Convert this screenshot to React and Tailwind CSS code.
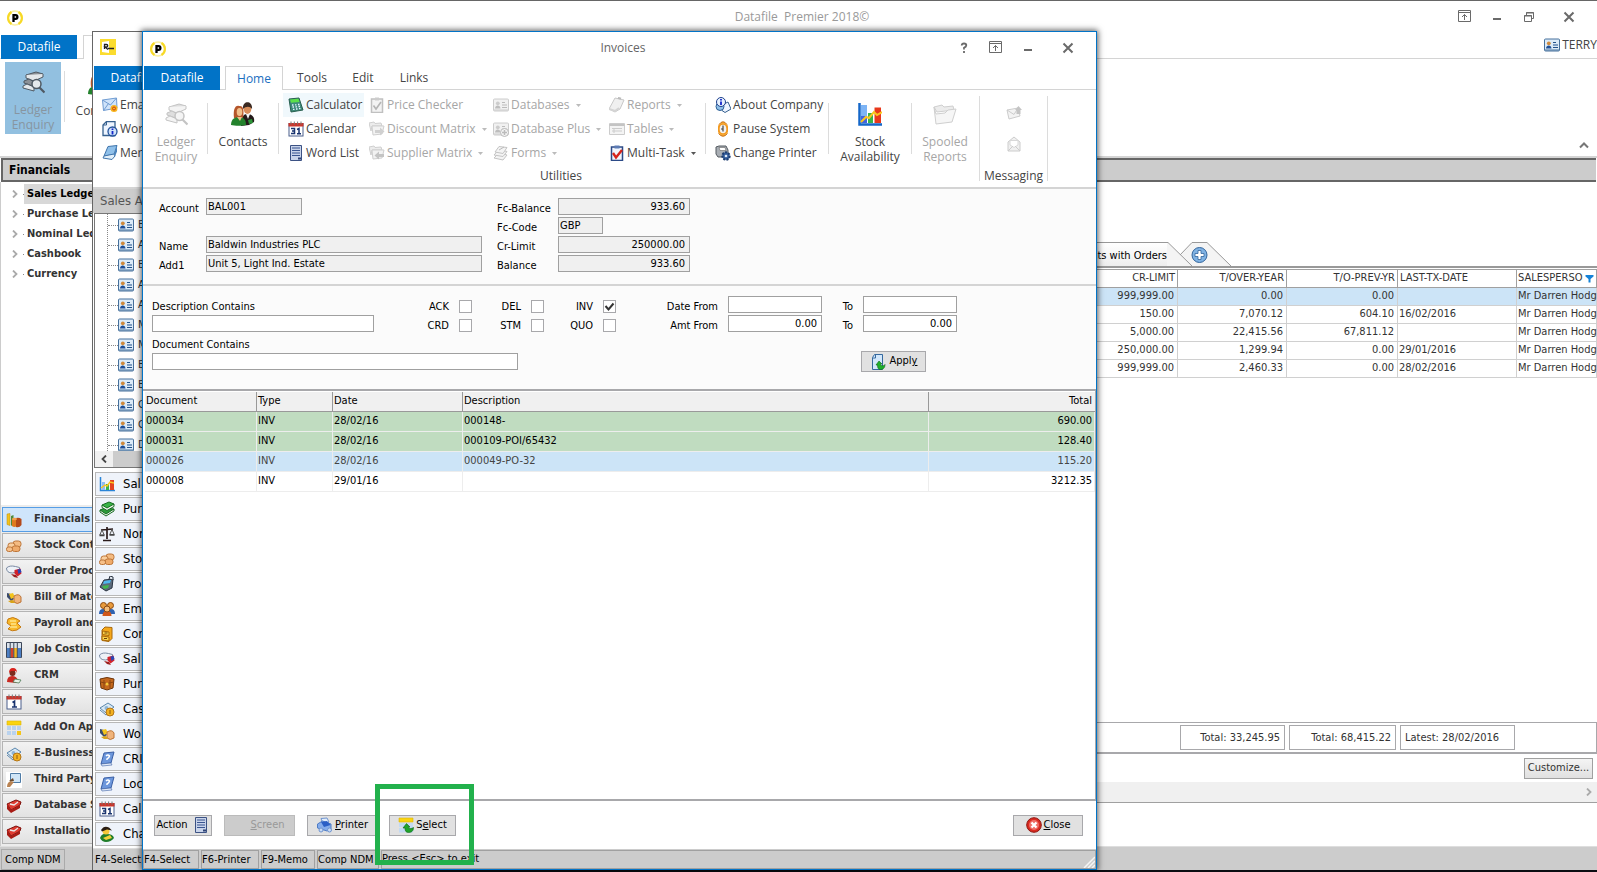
import clsx from 'clsx'

const UI = "font-['Open_Sans','Noto_Sans',sans-serif]"
const FORM = "font-['DejaVu_Sans_Condensed','DejaVu_Sans',sans-serif]"

const TREE = ['Sales Ledge', 'Purchase Le', 'Nominal Led', 'Cashbook', 'Currency']

const MODULES = [
  ['coins', 'Financials'],
  ['boxes', 'Stock Cont'],
  ['order', 'Order Proc'],
  ['works', 'Bill of Mate'],
  ['payroll', 'Payroll and'],
  ['binders', 'Job Costin'],
  ['crm', 'CRM'],
  ['today', 'Today'],
  ['addon', 'Add On Ap'],
  ['cash', 'E-Business'],
  ['thirdparty', 'Third Party'],
  ['toolbox', 'Database S'],
  ['toolbox', 'Installatio'],
]

const SALES_APPS = [
  ['chart', 'Sal'],
  ['books', 'Pur'],
  ['scales', 'Nor'],
  ['boxes', 'Sto'],
  ['register', 'Pro'],
  ['people', 'Em'],
  ['cabinet', 'Cor'],
  ['order', 'Sal'],
  ['chest', 'Pur'],
  ['cash', 'Cas'],
  ['works', 'Wo'],
  ['help', 'CRI'],
  ['help', 'Loc'],
  ['calendar', 'Cal'],
  ['change', 'Cha'],
]

const ACCOUNT_INITIALS = ['B', 'A', 'B', 'A', 'A', 'M', 'M', 'B', 'B', 'C', 'C', 'D']

const INVOICES = [
  { doc: '000034', type: 'INV', date: '28/02/16', desc: '000148-', total: '690.00', tone: 'green' },
  { doc: '000031', type: 'INV', date: '28/02/16', desc: '000109-POI/65432', total: '128.40', tone: 'green' },
  { doc: '000026', type: 'INV', date: '28/02/16', desc: '000049-PO-32', total: '115.20', tone: 'blue' },
  { doc: '000008', type: 'INV', date: '29/01/16', desc: '', total: '3212.35' },
]

const ACCOUNTS = [
  ['999,999.00', '0.00', '0.00', '', 'Mr Darren Hodg'],
  ['150.00', '7,070.12', '604.10', '16/02/2016', 'Mr Darren Hodg'],
  ['5,000.00', '22,415.56', '67,811.12', '', 'Mr Darren Hodg'],
  ['250,000.00', '1,299.94', '0.00', '29/01/2016', 'Mr Darren Hodg'],
  ['999,999.00', '2,460.33', '0.00', '28/02/2016', 'Mr Darren Hodg'],
]

export default function App() {
  return (
    <div className={`relative flex min-h-screen flex-col overflow-hidden border-t border-[#666] bg-white ${UI}`}>
      <MainWindow />
      <SalesWindow />
      <InvoicesWindow />
      <div className="h-0.5 bg-[#0b0d12]" />
    </div>
  )
}

/* ---------- main application window ---------- */

function MainWindow() {
  return (
    <div className="flex flex-1 flex-col">
      <TitleBar title="Datafile  Premier 2018©" muted>
        <WinButton label="Ribbon display"><Icon name="pin" size={14} /></WinButton>
        <WinButton label="Minimise"><Icon name="minimise" size={14} /></WinButton>
        <WinButton label="Restore"><Icon name="restore" size={14} /></WinButton>
        <WinButton label="Close window" wide><Icon name="cross" size={14} /></WinButton>
      </TitleBar>

      <div className="flex h-6 items-stretch border-b border-[#d4d4d4] pl-px">
        <button className="-mb-px w-19 bg-[#0173c7] text-xs text-white">Datafile</button>
        <div className="-mb-px ml-1.5 w-14 border-x border-t border-[#d4d4d4] bg-white" />
        <div className="ml-auto flex items-center gap-0.5 pb-1 text-xs text-[#444]">
          <Icon name="card" />
          TERRY
        </div>
      </div>

      <div className="flex h-[99px] items-start border-b-2 border-[#d4d4d4] pl-[5px]">
        <div className="mt-[3px]">
          <BigButton icon="ledger" label={['Ledger', 'Enquiry']} className="h-[72px] w-14 bg-[#92c0e0] pt-2 text-[#8795a0]" />
        </div>
        <div className="mt-3 ml-[3px] h-[51px] w-px bg-[#dcdcdc]" />
        <BigButton icon="contacts" label={['Contacts']} className="w-[70px] pt-3 text-[#444]" />
        <button aria-label="Collapse ribbon" className="mt-auto mr-2 mb-1.5 ml-auto">
          <Icon name="chevronUp" size={10} />
        </button>
      </div>

      <div className={`mx-px flex h-6 items-center border-y-2 border-l-2 border-[#666] bg-[#ccc] pl-1.5 text-xs font-bold text-black ${FORM}`}>
        Financials
      </div>

      <div className={`flex flex-1 text-[11px] ${FORM}`}>
        <SideNav />
        <AccountsPane />
      </div>

      <div className={`flex h-6 items-end border-t border-[#dedede] bg-[#ccc] pl-px text-[11px] ${FORM}`}>
        <span className="h-[21px] border border-[#aaa] px-[3px] leading-5">Comp NDM</span>
      </div>
    </div>
  )
}

function SideNav() {
  return (
    <aside className="flex w-[220px] flex-col border-l border-[#ccc] font-bold text-[#333]">
      <ul className="pt-0.5">
        {TREE.map((name, i) => (
          <li key={name} className="flex h-5 items-center pl-2.5">
            <Icon name="chevronRight" size={8} />
            <span className="ml-1 w-px border-t border-[#888]" />
            <span className={clsx('h-5 flex-1 pl-[3px] leading-5', i === 0 && 'bg-[#d8d8d8] text-black')}>{name}</span>
          </li>
        ))}
      </ul>
      <ul className="mt-auto flex flex-col gap-px bg-[#ececec] pt-0.5 pb-0.5 pl-px">
        {MODULES.map(([icon, name], i) => (
          <li key={name}>
            <button
              className={clsx('flex h-[25px] w-full items-center gap-3 border pl-[3px] text-left',
                i === 0 ? 'border-[#569de5] bg-[#cfe5fb]' : 'border-[#b4b4b4] bg-linear-to-b from-[#f2f2f2] to-[#e2e2e2]')}>
              <Icon name={icon} />
              {name}
            </button>
          </li>
        ))}
      </ul>
    </aside>
  )
}

function AccountsPane() {
  const head = 'h-[18px] border-r border-b border-[#a0a0a0] px-0.5 font-normal'
  return (
    <main className="flex flex-1 flex-col text-[#333]">
      <div className="flex h-[86px] items-end justify-end border-b-2 border-[#999] pr-[366px]">
        <div className="flex h-6 items-center border-t border-[#999] bg-linear-to-b from-white to-[#ededed] pt-1 pl-4 text-black">
          Accounts with Orders
        </div>
        <svg width="64" height="24" viewBox="0 0 64 24" aria-label="Add tab" role="img">
          <path d="M0 0.5H1L25 24H0Z" fill="#f4f4f4" />
          <path d="M13 13L25 0.5H40L64 24H25Z" fill="#f4f4f4" />
          <path d="M0 0.5H1L25 24M13 13L25 0.5H40L64 24" fill="none" stroke="#999" />
          <circle cx="32.500" cy="13" r="7.500" fill="#7fb2e3" stroke="#33659c" />
          <path d="M31 8.500h3v3h3v3h-3v3h-3v-3h-3v-3h3z" fill="#fff" stroke="#33659c" strokeWidth=".8" />
        </svg>
      </div>

      <table className="mt-px w-full table-fixed border-collapse border-t border-[#a0a0a0]">
        <thead>
          <tr>
            <th className={`${head} text-right`}>CR-LIMIT</th>
            <th className={`${head} w-[109px] text-right`}>T/OVER-YEAR</th>
            <th className={`${head} w-[111px] text-right`}>T/O-PREV-YR</th>
            <th className={`${head} w-[119px] text-left`}>LAST-TX-DATE</th>
            <th className="h-[18px] w-20 border-r border-b border-[#a0a0a0] pl-px text-left font-normal">
              <div className="flex items-center gap-0.5">
                <span className="w-[65px] overflow-hidden">SALESPERSON</span>
                <Icon name="filter" size={9} />
              </div>
            </th>
          </tr>
        </thead>
        <tbody>
          {ACCOUNTS.map((row, i) => (
            <tr key={i} className={clsx(i === 0 && 'bg-[#cce4f7]')}>
              {row.map((cell, c) => (
                <td key={c} className={clsx('h-[18px] border-r border-b border-[#d0d0d0] pl-px whitespace-nowrap', c < 3 && 'pr-[3px] text-right')}>
                  {cell}
                </td>
              ))}
            </tr>
          ))}
        </tbody>
      </table>

      <div className="mt-auto flex h-8 items-center justify-end gap-1 border-t border-r border-b-2 border-[#a8a8ab] pr-[81px]">
        <span className="h-[25px] w-[105px] border border-[#a8a8ab] px-1 text-right leading-6">Total: 33,245.95</span>
        <span className="h-[25px] w-[107px] border border-[#a8a8ab] px-1 text-right leading-6">Total: 68,415.22</span>
        <span className="h-[25px] w-[115px] border border-[#a8a8ab] px-1 leading-6">Latest: 28/02/2016</span>
      </div>
      <div className="flex h-7 items-center justify-end pr-1">
        <button className="h-[21px] w-[69px] border border-[#a0a0a0] bg-linear-to-b from-[#f4f4f4] to-[#e0e0e0]">Customize...</button>
      </div>
      <div className="flex h-5 items-center justify-end bg-[#f0f0f0] pr-1">
        <Icon name="chevronRight" size={8} />
      </div>
      <div className="h-11 border-t border-[#a0a0a0]" />
    </main>
  )
}

/* ---------- sales accounts window ---------- */

function SalesWindow() {
  return (
    <section className="absolute top-[30px] bottom-0.5 left-[92px] flex w-[220px] flex-col border-t border-l border-[#666] bg-white">
      <div className="flex h-[34px] shrink-0 items-start pt-[7px] pl-[7px]"><Icon name="ledgerBadge" /></div>
      <div className="flex h-6 shrink-0 border-b border-[#d4d4d4] pl-px">
        <button className="-mb-px w-19 bg-[#0173c7] text-xs text-white">Datafile</button>
      </div>
      <div className="flex h-[99px] shrink-0 flex-col border-b-2 border-[#d4d4d4] pt-[3px] pl-1">
        <SmallButton icon="email" label="Ema" />
        <SmallButton icon="word" label="Wor" />
        <SmallButton icon="merge" label="Mer" />
      </div>

      <div className={`flex min-h-0 flex-1 flex-col ${FORM}`}>
        <div className="flex h-6 shrink-0 items-center bg-[#ccc] pl-[7px] text-[13px] text-[#555]">Sales A</div>
        <div className="ml-px flex min-h-0 flex-1 flex-col border border-[#777]">
          <ul className="ml-3 min-h-0 flex-1 overflow-hidden border-l border-dotted border-[#888] pt-px">
            {ACCOUNT_INITIALS.map((letter, i) => (
              <li key={i} className="flex h-5 items-center gap-1 text-[11px] text-[#333]">
                <span className="-mr-1 w-2.5 border-t border-dotted border-[#888]" />
                <Icon name="card" />
                {letter}
              </li>
            ))}
          </ul>
          <div className="flex h-4 shrink-0 bg-[#ccc]">
            <span className="grid w-[18px] place-items-center bg-[#f0f0f0]"><Icon name="chevronLeft" size={8} /></span>
          </div>
        </div>
        <ul className="flex shrink-0 flex-col gap-px pt-1 pb-0.5 pl-0.5">
          {SALES_APPS.map(([icon, name], i) => (
            <li key={i}>
              <button className="flex h-6 w-full items-center gap-2 border border-[#b8b8b8] bg-[#eff3fa] pl-[3px] text-left text-[13px] text-black">
                <Icon name={icon} />
                {name}
              </button>
            </li>
          ))}
        </ul>
        <div className="h-[22px] shrink-0 border-t border-[#dedede] bg-[#ccc] pl-0.5 text-[11px] leading-[22px]">F4-Select</div>
      </div>
    </section>
  )
}

/* ---------- invoices window ---------- */

function InvoicesWindow() {
  return (
    <section className="absolute top-[30px] right-[500px] bottom-0.5 left-[142px] flex flex-col border border-[#0173c7] bg-white shadow-[0_0_6px_1px_rgba(0,0,0,0.65)]">
      <TitleBar title="Invoices">
        <WinButton label="Help"><Icon name="question" size={14} /></WinButton>
        <WinButton label="Ribbon display"><Icon name="pin" size={14} /></WinButton>
        <WinButton label="Minimise"><Icon name="minimise" size={14} /></WinButton>
        <WinButton label="Close window" wide><Icon name="cross" size={14} /></WinButton>
      </TitleBar>

      <nav className="flex h-6 items-stretch border-b border-[#d4d4d4] pl-px text-xs text-[#444]">
        <button className="-mb-px w-19 bg-[#0173c7] text-white">Datafile</button>
        <button className="-mb-px ml-[5px] w-[58px] border-x border-t border-[#d4d4d4] bg-white text-[#1b6fbf]">Home</button>
        <button className="w-[58px] pt-px">Tools</button>
        <button className="w-11 pt-px">Edit</button>
        <button className="w-[58px] pt-px">Links</button>
      </nav>

      <Ribbon />
      <AccountSummary />
      <Filters />

      <div className={`flex flex-1 flex-col border-r border-b-2 border-[#a8a8ab] pl-0.5 text-[11px] ${FORM}`}>
        <InvoiceTable />
      </div>

      <footer className={`flex h-12 items-center pr-[13px] pl-[11px] text-[11px] text-black ${FORM}`}>
        <FormButton className="w-[58px] gap-1.5">Action<Icon name="list" /></FormButton>
        <FormButton disabled className="ml-3 w-[71px] pl-4 text-[#999]"><span><u>S</u>creen</span></FormButton>
        <FormButton className="ml-3 w-[71px] gap-0.5"><Icon name="bluePrinter" /><span><u>P</u>rinter</span></FormButton>
        <FormButton className="ml-[11px] w-[67px] gap-0.5"><Icon name="select" /><span>S<u>e</u>lect</span></FormButton>
        <FormButton className="ml-auto w-[70px] gap-0.5"><Icon name="close" /><span><u>C</u>lose</span></FormButton>
      </footer>

      <div className={`flex h-5 items-stretch gap-0.5 bg-[#ccc] pt-px text-[11px] text-black ${FORM}`}>
        <StatusCell className="w-14">F4-Select</StatusCell>
        <StatusCell className="w-[58px]">F6-Printer</StatusCell>
        <StatusCell className="w-[54px]">F9-Memo</StatusCell>
        <StatusCell className="w-[62px]">Comp NDM</StatusCell>
        <StatusCell className="flex flex-1 items-end justify-between">
          Press &lt;Esc&gt; to exit
          <Icon name="grip" size={12} />
        </StatusCell>
      </div>

      {/* highlight around the Select button */}
      <div className="pointer-events-none absolute bottom-1 left-[232px] h-[81px] w-[99px] border-5 border-[#22b14c]" />
    </section>
  )
}

function Ribbon() {
  return (
    <div className="flex h-[99px] items-stretch border-b-2 border-[#d4d4d4] text-[#444]">
      <div className="flex w-[836px] flex-col">
        <div className="flex flex-1 items-start">
          <BigButton icon="ledgerOff" label={['Ledger', 'Enquiry']} disabled className="ml-0.5 w-[62px] pt-3" />
          <Divider />
          <BigButton icon="contacts" label={['Contacts']} className="w-[70px] pt-3" />
          <Divider />
          <div className="ml-1 w-[81px] pt-[3px]">
            <SmallButton icon="calculator" label="Calculator" active />
            <SmallButton icon="calendar" label="Calendar" />
            <SmallButton icon="list" label="Word List" />
          </div>
          <div className="w-[124px] pt-[3px]">
            <SmallButton icon="priceOff" label="Price Checker" disabled />
            <SmallButton icon="folderRightOff" label="Discount Matrix" disabled menu />
            <SmallButton icon="folderLeftOff" label="Supplier Matrix" disabled menu />
          </div>
          <div className="w-[116px] pt-[3px]">
            <SmallButton icon="cardOff" label="Databases" disabled menu />
            <SmallButton icon="cardPlusOff" label="Database Plus" disabled menu />
            <SmallButton icon="formsOff" label="Forms" disabled menu />
          </div>
          <div className="w-[101px] pt-[3px]">
            <SmallButton icon="reportsOff" label="Reports" disabled menu />
            <SmallButton icon="tablesOff" label="Tables" disabled menu />
            <SmallButton icon="task" label="Multi-Task" menu />
          </div>
          <Divider />
          <div className="ml-1 w-[118px] pt-[3px]">
            <SmallButton icon="about" label="About Company" />
            <SmallButton icon="pause" label="Pause System" />
            <SmallButton icon="printer" label="Change Printer" />
          </div>
          <Divider />
          <BigButton icon="stock" label={['Stock', 'Availability']} className="w-[82px] pt-3" />
          <Divider />
          <BigButton icon="spooledOff" label={['Spooled', 'Reports']} disabled className="w-[66px] pt-3" />
        </div>
        <p className="pb-[3px] text-center text-xs leading-4">Utilities</p>
      </div>
      <div className="my-1.5 flex w-[69px] flex-col items-center border-x border-[#dcdcdc]">
        <button disabled aria-label="Send message" className="mt-2"><Icon name="mailOff" /></button>
        <button disabled aria-label="Read message" className="mt-4"><Icon name="mailOpenOff" /></button>
        <p className="-mb-[3px] mt-auto text-xs leading-4">Messaging</p>
      </div>
    </div>
  )
}

function AccountSummary() {
  return (
    <div className={`grid auto-rows-[17px] grid-cols-[47px_291px_61px_132px] gap-y-0.5 border-b-2 border-[#d4d4d4] bg-[#fbfbfb] pt-[9px] pb-3 pl-4 text-[11px] text-black ${FORM}`}>
      <Field id="account" label="Account" value="BAL001" className="w-24" />
      <Field id="fc-balance" label="Fc-Balance" value="933.60" className="w-[132px] pr-1 text-right" />
      <Field id="fc-code" label="Fc-Code" value="GBP" labelClass="col-start-3" className="w-[45px]" />
      <Field id="name" label="Name" value="Baldwin Industries PLC" className="w-[276px]" />
      <Field id="cr-limit" label="Cr-Limit" value="250000.00" className="w-[132px] pr-1 text-right" />
      <Field id="add1" label="Add1" value="Unit 5, Light Ind. Estate" className="w-[276px]" />
      <Field id="balance" label="Balance" value="933.60" className="w-[132px] pr-1 text-right" />
    </div>
  )
}

function Field({ id, label, value, className, labelClass }) {
  return (
    <>
      <label htmlFor={id} className={clsx('leading-[22px]', labelClass)}>{label}</label>
      <input id={id} readOnly defaultValue={value}
        className={clsx('h-[17px] border border-[#a0a0a0] bg-[#f0f0f0] px-px outline-none', className)} />
    </>
  )
}

function Filters() {
  const box = 'h-[17px] border border-[#a0a0a0] bg-white px-1 text-right outline-none'
  return (
    <form onSubmit={(e) => e.preventDefault()}
      className={`grid grid-cols-[249px_72px_72px_72px_205px_135px] grid-rows-[repeat(4,17px)] gap-y-0.5 border-b-2 border-[#a8a8ab] bg-[#fbfbfb] pt-2.5 pb-[19px] pl-[9px] text-[11px] text-black ${FORM}`}>
      <label htmlFor="desc" className="leading-[22px]">Description Contains</label>
      <Check label="ACK" />
      <Check label="DEL" />
      <Check label="INV" checked />
      <div className="flex justify-end gap-2.5">
        <label htmlFor="date-from" className="leading-[22px]">Date From</label>
        <input id="date-from" className={`${box} w-[94px]`} />
      </div>
      <div className="flex justify-end gap-2.5">
        <label htmlFor="date-to" className="leading-[22px]">To</label>
        <input id="date-to" className={`${box} w-[94px]`} />
      </div>

      <input id="desc" className={`${box} w-[222px]`} />
      <Check label="CRD" />
      <Check label="STM" />
      <Check label="QUO" />
      <div className="flex justify-end gap-2.5">
        <label htmlFor="amt-from" className="leading-[22px]">Amt From</label>
        <input id="amt-from" defaultValue="0.00" className={`${box} w-[94px]`} />
      </div>
      <div className="flex justify-end gap-2.5">
        <label htmlFor="amt-to" className="leading-[22px]">To</label>
        <input id="amt-to" defaultValue="0.00" className={`${box} w-[94px]`} />
      </div>

      <label htmlFor="doc" className="col-span-6 leading-[22px]">Document Contains</label>
      <input id="doc" className={`${box} col-span-5 w-[366px]`} />
      <div className="flex items-center justify-center pl-2">
        <FormButton className="w-[65px] shrink-0 gap-1"><Icon name="apply" /><span>Appl<u>y</u></span></FormButton>
      </div>
    </form>
  )
}

function Check({ label, checked }) {
  return (
    <label className="flex items-end justify-end gap-2.5 pr-px">
      <span className="leading-3">{label}</span>
      <span className="grid">
        <input type="checkbox" defaultChecked={checked}
          className="peer col-start-1 row-start-1 size-[13px] appearance-none border border-[#a8a8ab] bg-white" />
        <svg viewBox="0 0 13 13" className="pointer-events-none invisible col-start-1 row-start-1 size-[13px] peer-checked:visible">
          <path d="M2.500 6L5.500 9.500L10.500 3.500" fill="none" stroke="#333" strokeWidth="2" />
        </svg>
      </span>
    </label>
  )
}

function InvoiceTable() {
  const head = 'h-5 border-r border-b border-[#999] pl-px text-left font-normal'
  return (
    <table className="mt-px w-full table-fixed border-separate border-spacing-0 text-black">
      <thead className="bg-[#f0f0f0]">
        <tr>
          <th className={`${head} w-28`}>Document</th>
          <th className={`${head} w-[76px]`}>Type</th>
          <th className={`${head} w-[130px]`}>Date</th>
          <th className={head}>Description</th>
          <th className="h-5 w-[166px] border-b border-[#999] pr-[3px] text-right font-normal">Total</th>
        </tr>
      </thead>
      <tbody>
        {INVOICES.map((inv) => (
          <tr key={inv.doc}
            className={clsx('[&>td]:h-5 [&>td]:border-r [&>td]:border-b [&>td]:border-[#ededed] [&>td]:pl-px',
              inv.tone === 'green' && 'bg-[#c0dcc0]',
              inv.tone === 'blue' && 'bg-[#cce4f7] text-[#444]')}>
            <td>{inv.doc}</td>
            <td>{inv.type}</td>
            <td>{inv.date}</td>
            <td>{inv.desc}</td>
            <td className="pr-0.5 text-right">{inv.total}</td>
          </tr>
        ))}
      </tbody>
    </table>
  )
}

/* ---------- shared pieces ---------- */

function TitleBar({ title, muted, children }) {
  return (
    <header className="grid h-[34px] grid-cols-[1fr_auto_1fr] items-center pl-[7px]">
      <Icon name="logo" />
      <h1 className={clsx('pb-0.5 text-xs whitespace-pre', muted ? 'text-[#999]' : 'text-[#666]')}>{title}</h1>
      <div className="flex justify-end pr-1 pb-0.5">{children}</div>
    </header>
  )
}

function WinButton({ label, wide, children }) {
  return <button aria-label={label} className={clsx('grid place-items-center', wide ? 'w-12' : 'w-8')}>{children}</button>
}

function BigButton({ icon, label, className, disabled }) {
  return (
    <button disabled={disabled}
      className={clsx('flex flex-col items-center gap-2 text-xs leading-[15px]', disabled && 'text-[#a6a6a6]', className)}>
      <Icon name={icon} size={24} />
      <span>
        {label.map((line) => <span key={line} className="block">{line}</span>)}
      </span>
    </button>
  )
}

function SmallButton({ icon, label, active, disabled, menu }) {
  return (
    <button disabled={disabled}
      className={clsx('flex h-6 items-center gap-0.5 pl-[5px] text-xs whitespace-nowrap',
        disabled ? 'text-[#a6a6a6]' : 'text-[#444]', active && 'w-full bg-[#f0f8fc]')}>
      <Icon name={icon} />
      {label}
      {menu && (
        <svg width="5" height="3" viewBox="0 0 5 3" className="ml-1"><path d="M0 0h5L2.500 3z" fill={disabled ? '#bbb' : '#555'} /></svg>
      )}
    </button>
  )
}

function FormButton({ className, disabled, children }) {
  return (
    <button type="button" disabled={disabled}
      className={clsx('flex h-[21px] items-center justify-center border',
        disabled ? 'border-[#bbb] bg-[#ccc]' : 'border-[#a8a8ab] bg-[#e1e1e1]', className)}>
      {children}
    </button>
  )
}

function StatusCell({ className, children }) {
  return <span className={clsx('border border-[#a0a0a0] leading-[18px] whitespace-nowrap', className)}>{children}</span>
}

function Divider() {
  return <span className="mt-[13px] h-[51px] w-px bg-[#dcdcdc]" />
}

function Icon({ name, size = 16 }) {
  const box = BOXES[name] || 16
  return (
    <svg width={size} height={size} viewBox={`0 0 ${box} ${box}`} className="shrink-0" aria-hidden="true">
      {ICONS[name]}
    </svg>
  )
}

const BOXES = {
  pin: 14, minimise: 14, restore: 14, cross: 14, question: 14,
  chevronUp: 10, chevronRight: 8, chevronLeft: 8, filter: 9, grip: 12,
  ledger: 24, ledgerOff: 24, contacts: 24, stock: 24, spooledOff: 24,
}

function Card({ edge, fill, ink, head, shirt }) {
  return (
    <>
      <rect x=".5" y="2" width="15" height="12" rx="1" fill={fill} stroke={edge} />
      <circle cx="4.800" cy="6.300" r="1.900" fill={head} />
      <path d="M2 11.500c0-4 5.500-4 5.500 0z" fill={shirt} />
      <path d="M9 5.500h3M9 8h5M9 10.500h5" stroke={ink} strokeWidth="1.200" />
      <path d="M1 13h14" stroke={edge} />
    </>
  )
}

function LedgerArt({ dark, mid, light }) {
  return (
    <>
      <path d="M5 5l10-3 7 2-9 4z" fill={mid} stroke={dark} />
      <path d="M5 5v3l8 3 9-4V4" fill={light} stroke={dark} />
      <path d="M3 11l5-2 5 3 4-1v2l-5 3-9-3z" fill={mid} stroke={dark} />
      <path d="M2 16l4-2 7 3v4L2 18z" fill={light} stroke={dark} />
      <circle cx="15.500" cy="14" r="4.500" fill={light} stroke={dark} strokeWidth="1.500" />
      <path d="M18.500 17.500l5 5" stroke={dark} strokeWidth="2.200" />
    </>
  )
}

function CalendarArt({ children }) {
  return (
    <>
      <rect x="1" y="2.500" width="14" height="12.500" fill="#fff" stroke="#4a5f8c" />
      <path d="M.5 2h15v3.500H.5z" fill="#c8372d" />
      <path d="M3 .5v3M6.300.5v3M9.600.5v3M13 .5v3" stroke="#777" />
      {children}
    </>
  )
}

const ICONS = {
  logo: (
    <>
      <circle cx="8" cy="8" r="7" fill="#fff" stroke="#fbf0a0" strokeWidth="1.500" />
      <path d="M4.500 2A7 7 0 0 0 4.500 14M11.500 2A7 7 0 0 1 11.500 14" fill="none" stroke="#f7d926" strokeWidth="2.200" />
      <path d="M6.500 12V5.200H8.600a1.800 1.800 0 0 1 0 3.600H6.500" fill="none" stroke="#000" strokeWidth="2.300" />
    </>
  ),
  ledgerBadge: (
    <>
      <path d="M0 0h16v16H0z" fill="#fbdc2e" />
      <path d="M2 3l7-1v12l-7-1z" fill="#fff" />
      <path d="M4.500 10V5.500h2a1 1 0 0 1 0 2.500H5l3 2.500M8 9.500h6" fill="none" stroke="#222" strokeWidth="1.300" />
    </>
  ),
  pin: <path d="M.5.500h12v11H.5zM.5 2.500h12M6.500 10V4.500M4 7l2.500-2.500L9 7" fill="none" stroke="#6a6a6a" />,
  minimise: <path d="M3 9h8" stroke="#6a6a6a" strokeWidth="2" />,
  restore: <path d="M4.500 5V2.500h7v6H9.500M4 3h8M2.500 5.500h7v6h-7zM2 6h8" fill="none" stroke="#6a6a6a" />,
  cross: <path d="M2.500 2.500l9 9M11.500 2.500l-9 9" stroke="#6a6a6a" strokeWidth="2" />,
  question: <path d="M4.700 4.500Q4.700 2.500 7 2.500Q9.300 2.500 9.300 4.300Q9.300 5.800 7 6.800V8.500M7 10v2" fill="none" stroke="#6a6a6a" strokeWidth="1.800" />,
  chevronUp: <path d="M1 7.500L5 3.500L9 7.500" fill="none" stroke="#777" strokeWidth="2" />,
  chevronRight: <path d="M2 0.500L5.500 4L2 7.500" fill="none" stroke="#aaa" strokeWidth="1.800" />,
  chevronLeft: <path d="M6 .5L2.500 4L6 7.500" fill="none" stroke="#444" strokeWidth="1.800" />,
  filter: <path d="M.5 1h8v1.500L5.500 5v3.500h-2V5L.5 2.500z" fill="#1583d8" />,
  grip: <path d="M1 12L12 1M5 12l7-7M9 12l3-3" stroke="#f5f5f5" strokeWidth="1.500" />,

  card: <Card edge="#46709c" fill="#dcebf8" ink="#21518a" head="#d08a3c" shirt="#1f4f96" />,
  cardOff: <Card edge="#ccc" fill="#f1f1f1" ink="#bbb" head="#ccc" shirt="#bdbdbd" />,
  cardPlusOff: (
    <>
      <Card edge="#ccc" fill="#f1f1f1" ink="#bbb" head="#ccc" shirt="#bdbdbd" />
      <circle cx="11.500" cy="11.500" r="4" fill="#f4f4f4" stroke="#bbb" />
      <path d="M11.500 9v5M9 11.500h5" stroke="#bbb" strokeWidth="1.500" />
    </>
  ),
  ledger: <LedgerArt dark="#4f5963" mid="#8c9197" light="#e4e8eb" />,
  ledgerOff: <LedgerArt dark="#c4c4c4" mid="#dedede" light="#f4f4f4" />,
  contacts: (
    <>
      <path d="M10 24c-1-9 3-12 6-12 5 0 8 3 7 8l-5 3z" fill="#241a1a" />
      <path d="M15 12l2 5 2-5z" fill="#f4f4f4" />
      <ellipse cx="16.500" cy="7" rx="3.800" ry="5" fill="#d88d5a" />
      <path d="M12 7c-1-9 10-9 9 0-2-3-6-3-9 0z" fill="#3b2a22" />
      <path d="M3 16c-1-8 1-13 5-12 5-1 5 6 4 12z" fill="#b5562b" />
      <ellipse cx="8.500" cy="10" rx="2.800" ry="4" fill="#f1bf8a" />
      <path d="M0 23c0-6 4-8 8-8 5 0 7 3 7 8-4 1-11 1-15 0z" fill="#23822c" />
      <path d="M6 15l3 4 2-4z" fill="#f1bf8a" />
      <path d="M17 18l4-1 1 4-4 1z" fill="#2d9638" />
    </>
  ),
  calculator: (
    <>
      <path d="M1 2l10-1 4 12-12 2z" fill="#3d8a7a" stroke="#28604f" />
      <path d="M2 2.500l8.500-.8 1 3.300-8.500.8z" fill="#5be04a" />
      <path d="M4 8h1.500M7 7.800h1.500M10 7.500h1.500M4.500 10h1.500M7.500 9.800H9M10.500 9.500H12M5 12.300h1.500M8 12h1.500M11 11.700h1.500" stroke="#e6f4ff" strokeWidth="1.300" />
    </>
  ),
  calendar: (
    <CalendarArt>
      <path d="M3 7.500h3.500v5H3M4 10h2.500M9 8.500l2-1v5.500M9 12.700h4" fill="none" stroke="#1a3570" strokeWidth="1.500" />
    </CalendarArt>
  ),
  today: (
    <CalendarArt>
      <path d="M6.500 8.500l2-1.200V13M6 13h5" fill="none" stroke="#1a3570" strokeWidth="1.700" />
    </CalendarArt>
  ),
  list: (
    <>
      <path d="M2.500.5h11v15h-11z" fill="#c9d4ea" stroke="#3c5284" />
      <path d="M4 3h8M4 5.500h8M4 8h8M4 10.500h8" stroke="#3a5590" strokeWidth="1.200" />
      <path d="M10 12.500h3v2h-3z" fill="#2e4375" />
    </>
  ),
  priceOff: (
    <>
      <path d="M2.500 2h11v13.500h-11z" fill="#f3f3f3" stroke="#c0c0c0" strokeWidth="1.500" />
      <path d="M6 .5h4v3H6z" fill="#ccc" />
      <path d="M4.500 8.500L7 12l5-7" fill="none" stroke="#b5b5b5" strokeWidth="1.600" />
    </>
  ),
  folderRightOff: (
    <>
      <path d="M0 2l5-1 1 1.500 6-.5 1 3H3l-1 5z" fill="#ececec" stroke="#cfcfcf" />
      <path d="M3 5h12l-2 8-9 1z" fill="#f2f2f2" stroke="#cfcfcf" />
      <path d="M6 9h5V6.500l4.500 4-4.500 4V12H6z" fill="#d0d0d0" />
    </>
  ),
  folderLeftOff: (
    <>
      <path d="M0 2l5-1 1 1.500 6-.5 1 3H3l-1 5z" fill="#ececec" stroke="#cfcfcf" />
      <path d="M3 5h12l-2 8-9 1z" fill="#f2f2f2" stroke="#cfcfcf" />
      <path d="M15 9h-5V6.500l-4.500 4 4.500 4V12h5z" fill="#c4c4c4" />
    </>
  ),
  formsOff: (
    <>
      <path d="M1 13l9 2 4-5-8-2z" fill="#f4f4f4" stroke="#c4c4c4" />
      <path d="M1 10l9 1.500 4-5-8-2z" fill="#f4f4f4" stroke="#c4c4c4" />
      <path d="M2 7l8 1.500 4-6-8-1z" fill="#f4f4f4" stroke="#c4c4c4" />
      <path d="M6 5l5-3" stroke="#bbb" />
    </>
  ),
  reportsOff: (
    <>
      <path d="M6 1l9 2-4 9-5 3-6-3z" fill="#f0f0f0" stroke="#c8c8c8" />
      <path d="M0 12l6 2 4-3" fill="none" stroke="#d4d4d4" strokeWidth="2" />
      <path d="M9 .8l3 1" stroke="#bbb" strokeWidth="2" />
    </>
  ),
  tablesOff: (
    <>
      <path d="M.5 2.500h15v11H.5z" fill="#f4f4f4" stroke="#ccc" />
      <path d="M.5 4h15" stroke="#c4c4c4" strokeWidth="2" />
      <path d="M3 7.500h10M3 10h10M5 7v5" stroke="#ccc" />
    </>
  ),
  task: (
    <>
      <path d="M2.500 2h11v13.500h-11z" fill="#f2f6fd" stroke="#2b4a87" strokeWidth="1.500" />
      <path d="M5.500.5h5v3h-5z" fill="#5d7cb5" />
      <path d="M4 8l3 4.500L13 5" fill="none" stroke="#d6241c" strokeWidth="2.400" />
    </>
  ),
  about: (
    <>
      <path d="M9 7l4-2 3 7-6 3.500-3-2z" fill="#eef5ff" stroke="#37618f" />
      <circle cx="5" cy="9.500" r="4" fill="#8fc0e8" stroke="#2e5f94" />
      <circle cx="6" cy="5" r="4.500" fill="#e8f2ff" stroke="#1d3f8c" />
      <path d="M6 2v1.500M6 4.500v3.500" stroke="#1426c9" strokeWidth="1.800" />
    </>
  ),
  pause: (
    <>
      <path d="M4 3.500Q8-2 12 3.500M3.500 12.500Q8 18 12.500 12.500" fill="#f6a733" stroke="#c8741a" />
      <rect x="3" y="3" width="10" height="10" rx="3" fill="#f39a1f" />
      <ellipse cx="8" cy="8" rx="3.300" ry="4.300" fill="#f2f2f2" />
      <path d="M8 4.500V8h-2M8 8v2.500" fill="none" stroke="#444" strokeWidth="1.200" />
    </>
  ),
  printer: (
    <>
      <path d="M1 2l3-1h7l2 4v7H3L1 9z" fill="#a9aeb4" stroke="#545a60" />
      <path d="M4 2.500h6l1 3H5z" fill="#fff" stroke="#666" strokeWidth=".6" />
      <circle cx="11" cy="11" r="3.700" fill="#355f9e" stroke="#1d3d70" strokeDasharray="2 1.200" strokeWidth="2" />
      <circle cx="11" cy="11" r="1.300" fill="#dfe9f7" />
    </>
  ),
  stock: (
    <>
      <path d="M1.500 1v21.500H24" fill="none" stroke="#1467c9" strokeWidth="2.500" />
      <path d="M3 3h6v18H3z" fill="#7db4f5" />
      <path d="M3 14h6v7H3z" fill="#3f64de" />
      <path d="M10 11h5v10h-5z" fill="#38b44a" />
      <path d="M16.500 5.500H23V21h-6.500z" fill="#e8381b" />
      <path d="M3 20l5-5 3 1 5-6 3 3 5-3" fill="none" stroke="#fbc51e" strokeWidth="2" />
    </>
  ),
  spooledOff: (
    <>
      <path d="M1 5l8-2 2 2 9-1 1 4-17 2z" fill="#ececec" stroke="#cfcfcf" />
      <path d="M1 5l2 17 16-2 4-13-8 1-3 3-9 1z" fill="#f6f6f6" stroke="#cfcfcf" />
    </>
  ),
  mailOff: (
    <>
      <path d="M1 6l11-2 2 8-11 3z" fill="#f3f3f3" stroke="#ccc" />
      <path d="M1 6l7 4.500L12 4" fill="none" stroke="#ccc" />
      <path d="M9 6l3.500-4L16 6h-1.500v4h-4V6z" fill="#c4c4c4" />
    </>
  ),
  mailOpenOff: (
    <>
      <path d="M2 6l6-5 6 5v9H2z" fill="#f0f0f0" stroke="#ccc" />
      <path d="M4 4.500h8V9L8 11.500 4 9z" fill="#fff" stroke="#d8d8d8" />
      <path d="M2 15l5-5M14 15l-5-5" stroke="#ccc" />
    </>
  ),
  email: (
    <>
      <path d="M.5 3l14-2L15 11 1.500 13.500z" fill="#cfe3fa" stroke="#6f9bd1" />
      <path d="M.5 3l8 5 6-7M1.500 13.500l5-7" fill="none" stroke="#6f9bd1" />
      <circle cx="12" cy="11.500" r="3.500" fill="#f7b51e" />
      <circle cx="12" cy="11.500" r="1.500" fill="none" stroke="#d0410f" />
    </>
  ),
  word: (
    <>
      <path d="M4.500.5H13v14H1V4z" fill="#eef5ff" stroke="#37618f" strokeWidth="1.300" />
      <path d="M1 4h3.500V.5" fill="none" stroke="#37618f" />
      <circle cx="10.500" cy="10.500" r="4.500" fill="#cfe2fa" stroke="#23529b" strokeWidth="1.300" />
      <path d="M10.500 7.500V9M10.500 10v3.500" stroke="#1426c9" strokeWidth="1.800" />
    </>
  ),
  merge: (
    <>
      <path d="M6 1.500l9-1-3 9-10 1.500z" fill="#8fc0ea" stroke="#3f74ab" />
      <path d="M2 11l10-2 1 2-3 3.500-9-1.500z" fill="#e2f0fb" stroke="#3f74ab" />
      <path d="M12 9.500l3-9v6l-2 5z" fill="#4a83bd" />
    </>
  ),
  apply: (
    <>
      <path d="M4.500.5h8v15h-10v-12z" fill="#d2e7fb" stroke="#35699f" />
      <path d="M2.500 4h3V.5" fill="none" stroke="#35699f" />
      <path d="M6 11l3-4 3 3h-1.500c0 2 3 2.500 4.500.5 0 4-2.500 5-4.500 5-2.500 0-3-2-3-4.500z" fill="#1fb02a" stroke="#0e6418" strokeWidth=".6" />
    </>
  ),
  select: (
    <>
      <path d="M1 1h14v4H1z" fill="#fbd40f" stroke="#d8b40a" strokeWidth=".6" />
      <path d="M1 6h6.500v4H1zM1 11h6.500v4.500H1zM8.500 6H15v9.500H8.500z" fill="#c3daf3" />
      <path d="M5 11l3.500-4.500L12 10h-1.500c0 2 3 2 5 .5 0 4-2.500 5-5 5S7 14 7 11z" fill="#1fa32a" stroke="#0e6418" strokeWidth=".6" />
    </>
  ),
  bluePrinter: (
    <>
      <path d="M4 1.500l6-.5 2 4-6 2z" fill="#e2edfb" stroke="#6f94d0" />
      <path d="M.5 7l5-3 8.500 3v5l-4 2-9.500-3z" fill="#84aceb" stroke="#4f7cc4" />
      <path d="M4 5l6-1 3.500 4-6.500 2z" fill="#2a5fc6" />
      <circle cx="4" cy="13" r="2" fill="#c8dbf5" stroke="#6f94d0" />
      <circle cx="12.500" cy="13" r="2" fill="#c8dbf5" stroke="#6f94d0" />
    </>
  ),
  close: (
    <>
      <circle cx="8" cy="8" r="7.300" fill="#d92a20" stroke="#8f1812" />
      <circle cx="8" cy="8" r="5" fill="#ef6f68" />
      <path d="M5.500 5.500l5 5M10.500 5.500l-5 5" stroke="#fff" strokeWidth="2.300" />
    </>
  ),

  coins: (
    <>
      <path d="M1 2l3-.5v12L1 12.500z" fill="#f2c21b" stroke="#b88a0c" strokeWidth=".5" />
      <path d="M5 4l2.500-1v11L5 13.500z" fill="#4e8a3b" />
      <path d="M6 7q3-2 5 0v7q-3 2-5 0z" fill="#e07a1f" />
      <path d="M10 6q3-1 5.500 1v6q-2 3-5.500 2z" fill="#b4491a" />
      <ellipse cx="8.500" cy="7" rx="2.500" ry="1.200" fill="#f3a04e" />
    </>
  ),
  boxes: (
    <>
      <rect x="7" y="3" width="8" height="6" rx="2.500" fill="#f4bb82" stroke="#bd7538" />
      <rect x="2" y="5" width="7" height="6" rx="2.500" fill="#f9cfa0" stroke="#bd7538" />
      <rect x="6" y="8" width="8" height="5.500" rx="2.500" fill="#efab6b" stroke="#bd7538" />
      <rect x=".5" y="9" width="6" height="4.500" rx="2" fill="#f6c08a" stroke="#bd7538" />
    </>
  ),
  order: (
    <>
      <path d="M.5 4q3-3 9-1.500l4 1V7l-7 2q-6 0-6-5z" fill="#eef2f8" stroke="#7b8ba3" />
      <path d="M8.500 6l6-1.500 1 5-4 3-3-3z" fill="#d3232b" />
      <path d="M11.500 5.500l3-.5 1 3-3 2z" fill="#2946b8" />
      <path d="M5 10l5 1 2 3-4-1z" fill="#9b1f1f" />
    </>
  ),
  works: (
    <>
      <path d="M1 3l4 1 3 5-3 2-4-4z" fill="#3b4a6b" />
      <path d="M3 4l4-1 2 4-4 2z" fill="#f3c41c" />
      <path d="M8 6q5-3 7 1v5q-4 3-7 0z" fill="#f0b47c" stroke="#bd7538" />
      <path d="M2 11l5-1 2 3-4 0z" fill="#d9a418" />
    </>
  ),
  payroll: (
    <>
      <path d="M2 3q5-3 9 0l3 2-3 2 4 4-4 3q-5 2-9-1l3-3-4-3z" fill="#f8b92b" stroke="#c67a12" />
      <path d="M4 5h6M5 8h5M4 11h7" stroke="#fde58a" strokeWidth="1.300" />
    </>
  ),
  binders: (
    <>
      <path d="M.5.5h15v15H.5z" fill="#dbe3ec" stroke="#3c4658" />
      <path d="M1 6h3v9.500H1z" fill="#4c7fc4" />
      <path d="M4.500 6h3v9.500h-3z" fill="#d3412b" />
      <path d="M8 6h3v9.500H8z" fill="#f2b51f" />
      <path d="M11.500 6h3.500v9.500h-3.500z" fill="#4c7fc4" />
      <path d="M4.200 0v16M7.800 0v16M11.300 0v16" stroke="#3c4658" />
    </>
  ),
  crm: (
    <>
      <path d="M1 14q0-6 5-6t6 5l-2 2z" fill="#c92a22" />
      <circle cx="6.500" cy="5" r="3" fill="#7c2b1d" />
      <path d="M3 5q0-5 4-5t4 5l-1-2H5z" fill="#d9231d" />
      <path d="M9 11l6 1-2 3-6-1z" fill="#e9f2e9" stroke="#4c7a55" strokeWidth=".8" />
    </>
  ),
  addon: (
    <>
      <path d="M1 1h14v4H1z" fill="#fbd40f" stroke="#d8b40a" strokeWidth=".6" />
      <path d="M1 6h4v4H1zM6 6h4v4H6zM1 11h4v4H1zM6 11h4v4H6zM11 6h4v4h-4z" fill="#b9d2ee" />
      <path d="M11 11h4v4h-4z" fill="#f5c518" />
    </>
  ),
  cash: (
    <>
      <path d="M1 7l8-5 6 4-8 6z" fill="#d8e8f5" stroke="#5b87ad" />
      <path d="M1 9l6 5 3-2" fill="none" stroke="#5b87ad" />
      <circle cx="7.500" cy="7" r="2" fill="#8db4d6" />
      <circle cx="11" cy="11" r="4" fill="#f3b222" stroke="#b3761a" />
      <path d="M11 9v4" stroke="#8e5a0e" />
    </>
  ),
  thirdparty: (
    <>
      <path d="M0 0h16v16H0z" fill="#fff" />
      <path d="M4.500 1.500h10v9h-10z" fill="#cfe5f7" stroke="#4e7ba6" />
      <path d="M1 15q0-5 4-6l3 1-4 5z" fill="#b98352" />
      <path d="M3 9l4-3 1 3z" fill="#6d4a2c" />
    </>
  ),
  toolbox: (
    <>
      <path d="M1 6l9-4 5 2-1 3-9 5z" fill="#de3b30" stroke="#7d120d" />
      <path d="M1 6l4 6v3l-4-4zM5 12l9-5v3l-9 5z" fill="#a81c15" />
      <path d="M4 6l4 1 4-3" fill="none" stroke="#e8e8e8" strokeWidth="1.300" />
    </>
  ),
  chart: (
    <>
      <path d="M1.500 1v13.500H16" fill="none" stroke="#2a85d8" strokeWidth="1.500" />
      <path d="M3 6h3v8H3z" fill="#8fbdf5" />
      <path d="M7 8h3v6H7z" fill="#38b44a" />
      <path d="M11 4h4v10h-4z" fill="#e2431f" />
      <path d="M2 12l4-3 2 1 3-4 4 1" fill="none" stroke="#fbc51e" strokeWidth="1.400" />
    </>
  ),
  books: (
    <>
      <path d="M1 9v2l6 4 8-5V8" fill="#f2f7f0" stroke="#176a22" />
      <path d="M1 9l5-2 9 1-8 5z" fill="#2c9a3a" stroke="#176a22" />
      <path d="M3 4v2.500l5 3 7-4V3" fill="#f2f7f0" stroke="#176a22" />
      <path d="M3 4l7-3 5 2-7 4z" fill="#38b346" stroke="#176a22" />
    </>
  ),
  scales: (
    <>
      <path d="M8 1v12M4 14.500h8M2 4l12-1" stroke="#2a1a1a" strokeWidth="1.700" />
      <path d="M3 4L.8 9h4.400zM13 3.500L10.800 8.500h4.400z" fill="none" stroke="#555" />
      <path d="M.5 9.500h5M10.500 9h5" stroke="#444" strokeWidth="1.700" />
    </>
  ),
  register: (
    <>
      <path d="M1 11l4-7 9-1-1 9-6 3z" fill="#5b6a7c" stroke="#2b3442" />
      <path d="M5 5l7-1-1 3-7 1z" fill="#4fb6f0" />
      <path d="M3 10l7-1-1 3-4 1z" fill="#42b64e" />
      <path d="M10 3l1-3 3 1v3z" fill="#dfe5ec" stroke="#2b3442" />
    </>
  ),
  people: (
    <>
      <path d="M0 13q0-5 4-5t4 5zM8 13q0-5 4-5t4 5z" fill="#2f62b0" />
      <circle cx="4.500" cy="4.500" r="3" fill="#e89a3c" stroke="#8a4a14" />
      <circle cx="11.500" cy="4.500" r="3" fill="#e89a3c" stroke="#8a4a14" />
      <path d="M3.500 15q0-5 4.500-5t4.500 5z" fill="#d0571b" />
      <circle cx="8" cy="8" r="3" fill="#f5bd7b" stroke="#8a4a14" />
    </>
  ),
  cabinet: (
    <>
      <path d="M6 1l7 .5v11l-3 3-7-1V4z" fill="#f5a81c" stroke="#a8690c" />
      <path d="M3.500 5l6.500 1v3.500l-6.500-1zM3 10l7 1v4l-7-1z" fill="#fcd34c" stroke="#a8690c" />
      <path d="M5.500 7h3M5 12.500h3" stroke="#6d430a" />
    </>
  ),
  chest: (
    <>
      <path d="M1 3q7-3 14 0l-1 9-6 2-6-2z" fill="#c4681d" stroke="#6f360b" />
      <path d="M1.500 6q7 3 13 0M5 4v8M11 4v8" fill="none" stroke="#8a4611" />
      <circle cx="8" cy="8" r="1.500" fill="#f4c73a" />
    </>
  ),
  help: (
    <>
      <path d="M5 2l10-1-3 11-10 1z" fill="#6d97dc" stroke="#3a5fa5" />
      <path d="M2 13l10-1 1 2-10 1z" fill="#e3ebf8" stroke="#3a5fa5" strokeWidth=".6" />
      <path d="M7 5q2-2 3.500 0Q10 7 8 8v1" fill="none" stroke="#fff" strokeWidth="1.500" />
    </>
  ),
  change: (
    <>
      <path d="M1 12q2-5 7-4 6 0 7 4-3 4-8 4-4 0-6-4z" fill="#1f7d2a" />
      <circle cx="7" cy="5" r="3.500" fill="#f4c73a" />
      <path d="M2 4q3-5 8-2.500l3 3-5-1-5 2z" fill="#2a1c12" />
      <path d="M4 12l7-3 2 3-6 2z" fill="#f2d23a" />
    </>
  ),
}
